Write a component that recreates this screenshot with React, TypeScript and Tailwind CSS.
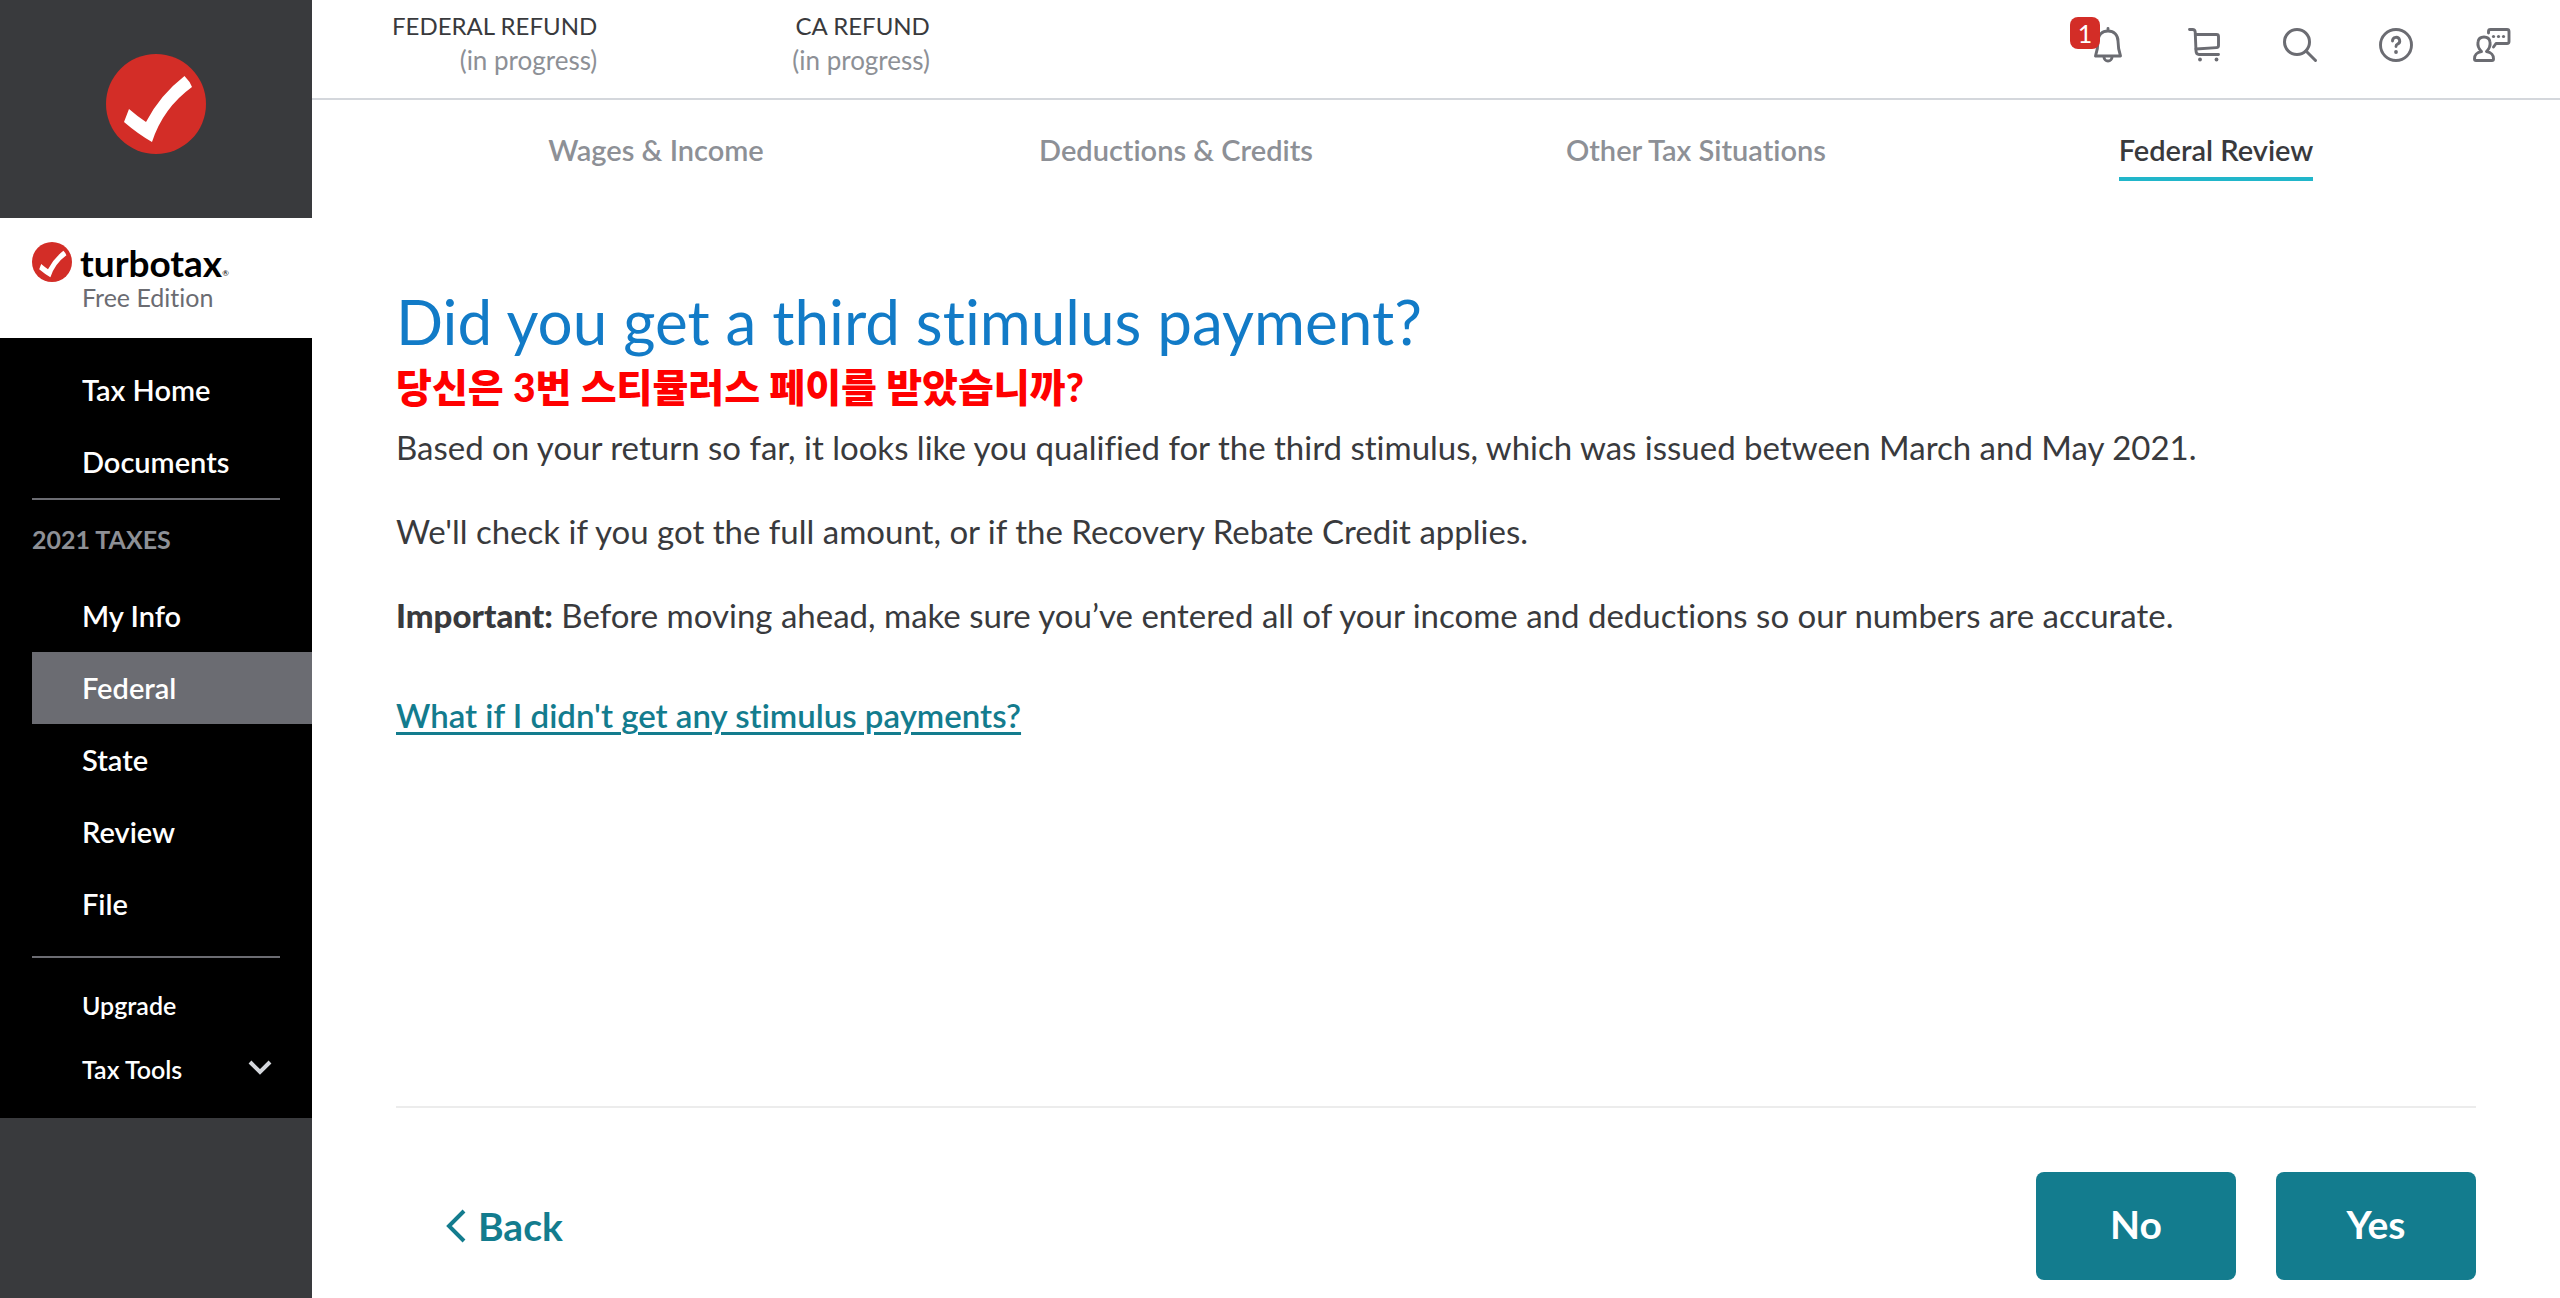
import React from "react";

type IconProps = { className?: string };

function CheckLogo({ className }: IconProps) {
  return (
    <svg viewBox="0 0 100 100" className={className} aria-hidden="true">
      <circle cx="50" cy="50" r="50" fill="#d32d27" />
      <path d="M23 55Q31 62 40 68Q54 41 78.500 22Q84 27.500 86 33Q57 54 46 88Q32 80 18 68Z" fill="#fff" />
    </svg>
  );
}

function BellIcon() {
  return (
    <svg viewBox="0 0 30 38" className="h-[38px] w-[30px]" fill="none" stroke="#6b6c72" strokeWidth="2.900" strokeLinejoin="round" strokeLinecap="round" aria-hidden="true">
      <path d="M15 2.500V5M15 5C9 5 5 9 5 15C5 22 4.500 24 2.500 30H27.500C25.500 24 25 22 25 15C25 9 21 5 15 5Z" />
      <path d="M11 31a4 4 0 0 0 8 0" />
    </svg>
  );
}

function CartIcon() {
  return (
    <svg viewBox="0 0 32 36" className="h-9 w-8" fill="none" stroke="#6b6c72" strokeWidth="2.900" strokeLinejoin="round" strokeLinecap="round" aria-hidden="true">
      <path d="M1.500 2.500H4.500Q7 2.500 7.200 5L8 24Q8.200 27.500 11 27.500H30.500" />
      <path d="M7.500 7.500H28.500Q30.500 7.500 30.500 9.500V18.500Q30.500 20.500 28.500 20.600L8 22" />
      <circle cx="12" cy="32.500" r="1.900" fill="#6b6c72" stroke="none" />
      <circle cx="28.500" cy="32.500" r="1.900" fill="#6b6c72" stroke="none" />
    </svg>
  );
}

function SearchIcon() {
  return (
    <svg viewBox="0 0 36 36" className="size-9" fill="none" stroke="#6b6c72" strokeWidth="3" strokeLinecap="round" aria-hidden="true">
      <circle cx="15" cy="15" r="12.500" />
      <path d="M24 24L33.500 33.500" />
    </svg>
  );
}

function HelpIcon() {
  return (
    <svg viewBox="0 0 36 36" className="size-9" fill="none" stroke="#6b6c72" strokeWidth="2.900" strokeLinecap="round" aria-hidden="true">
      <circle cx="18" cy="18" r="15.500" />
      <path d="M14.500 14A3.600 3.600 0 1 1 19.500 17.200Q18 17.800 18 19.500" />
      <circle cx="18" cy="25" r="1.900" fill="#6b6c72" stroke="none" />
    </svg>
  );
}

function ExpertIcon() {
  return (
    <svg viewBox="0 0 38 36" className="h-9 w-[38px]" fill="none" stroke="#6b6c72" strokeWidth="2.900" strokeLinejoin="round" strokeLinecap="round" aria-hidden="true">
      <path d="M8.500 24.500C5 21 4.500 18 5 15C5.500 11.500 8 10 11 10S16.500 11.500 17 15C17.500 18 17 21 13.500 24.500C18 25.500 20.500 27 20.500 32Q20.500 33.500 19 33.500H3Q1.500 33.500 1.500 32C1.500 27 4 25.500 8.500 24.500Z" />
      <path d="M15.500 6V4.500Q15.500 2.500 17.500 2.500H34Q36 2.500 36 4.500V14.500Q36 16.500 34 16.500H23L20.500 20" />
      <g fill="#6b6c72" stroke="none">
        <circle cx="20.500" cy="9.500" r="1.600" />
        <circle cx="25.500" cy="9.500" r="1.600" />
        <circle cx="30.500" cy="9.500" r="1.600" />
      </g>
    </svg>
  );
}

function NavItem({ label, active }: { label: string; active?: boolean }) {
  return (
    <a
      href="#"
      aria-current={active ? "page" : undefined}
      className={active ? "ml-8 flex h-18 items-center bg-[#6b6c72] pl-[50px]" : "ml-8 flex h-18 items-center pl-[50px]"}
    >
      {label}
    </a>
  );
}

function Sidebar() {
  return (
    <aside className="flex w-[312px] shrink-0 flex-col bg-[#393a3d]">
      <div className="flex h-[218px] justify-center pt-[54px]">
        <CheckLogo className="size-[100px]" />
      </div>
      <div className="flex h-[120px] gap-2 bg-white pt-6 pl-8">
        <CheckLogo className="size-10" />
        <div>
          <div className="flex items-end text-[37px] leading-[41px] font-bold text-black">
            turbotax<span className="text-[8px] leading-[20px] font-normal">®</span>
          </div>
          <div className="pl-0.5 text-[25px] leading-7 text-[#6b6c72]">Free Edition</div>
        </div>
      </div>
      <nav className="bg-black pt-4 pb-4 text-[29px] font-semibold text-white">
        <NavItem label="Tax Home" />
        <NavItem label="Documents" />
        <hr className="mx-8 border-t-2 border-[#6b6c72]" />
        <h2 className="flex h-20 items-center pl-8 text-[25px] font-bold text-[#8d9096]">2021 TAXES</h2>
        <NavItem label="My Info" />
        <NavItem label="Federal" active />
        <NavItem label="State" />
        <NavItem label="Review" />
        <NavItem label="File" />
        <hr className="mx-8 mt-4 mb-4 border-t-2 border-[#6b6c72]" />
        <div className="text-[25px]">
          <a href="#" className="flex h-16 items-center pl-[82px]">Upgrade</a>
          <button type="button" className="flex h-16 w-full items-center justify-between pr-10 pl-[82px]">
            Tax Tools
            <svg viewBox="0 0 24 20" className="h-5 w-6" fill="none" stroke="#d4d7dc" strokeWidth="4" aria-hidden="true">
              <path d="M2 2L12 12L22 2" />
            </svg>
          </button>
        </div>
      </nav>
    </aside>
  );
}

function Refund({ title }: { title: string }) {
  return (
    <div className="pt-2 text-right">
      <div className="text-[24px] leading-9 text-[#393a3d]">{title}</div>
      <div className="text-[26px] leading-8 text-[#8d9096]">(in progress)</div>
    </div>
  );
}

function Header() {
  return (
    <header className="flex h-[100px] justify-between border-b-2 border-[#d4d7dc] pr-12 pl-20">
      <div className="flex gap-[195px]">
        <Refund title="FEDERAL REFUND" />
        <Refund title="CA REFUND" />
      </div>
      <div className="flex items-center gap-14 pb-2 *:flex *:size-10 *:items-center *:justify-center">
        <button type="button" aria-label="Notifications, 1 new" className="relative">
          <BellIcon />
          <span className="absolute -top-2 -left-[18px] flex h-8 w-[30px] items-center justify-center rounded-lg bg-[#d32d27] text-[25px] leading-8 text-white">1</span>
        </button>
        <button type="button" aria-label="Cart"><CartIcon /></button>
        <button type="button" aria-label="Search"><SearchIcon /></button>
        <button type="button" aria-label="Help"><HelpIcon /></button>
        <button type="button" aria-label="Contact an expert"><ExpertIcon /></button>
      </div>
    </header>
  );
}

const tabs = ["Wages & Income", "Deductions & Credits", "Other Tax Situations", "Federal Review"];

export default function App() {
  return (
    <div className="flex min-h-screen bg-white font-['Lato','Noto_Sans_CJK_KR',sans-serif] text-[#393a3d] [font-variant-ligatures:no-common-ligatures]">
      <Sidebar />
      <div className="flex min-w-0 flex-1 flex-col">
        <Header />
        <nav className="grid grid-cols-4 px-[84px] pt-8 text-[29px] leading-9 font-semibold">
          {tabs.map((tab, i) => (
            <div key={tab} className="flex justify-center">
              <a href="#" className={i === 3 ? "border-b-4 border-[#21b6ca] pb-[9px]" : "pb-[9px] text-[#8d9096]"}>
                {tab}
              </a>
            </div>
          ))}
        </nav>
        <main className="flex flex-1 flex-col px-[84px] pt-[104px]">
          <h1 className="text-[62px] leading-[72px] text-[#127bc7]">Did you get a third stimulus payment?</h1>
          <p className="text-[39px] leading-[60px] font-black text-[#ff0000]">당신은 3번 스티뮬러스 페이를 받았습니까?</p>
          <div className="flex flex-col gap-10 pt-2 text-[33px] leading-[44px]">
            <p>Based on your return so far, it looks like you qualified for the third stimulus, which was issued between March and May 2021.</p>
            <p>We'll check if you got the full amount, or if the Recovery Rebate Credit applies.</p>
            <p><strong className="font-black">Important:</strong> Before moving ahead, make sure you’ve entered all of your income and deductions so our numbers are accurate.</p>
          </div>
          <a href="#" className="mt-14 self-start text-[33px] leading-[44px] font-semibold text-[#137c8e] underline decoration-3 underline-offset-4">
            What if I didn't get any stimulus payments?
          </a>
          <footer className="mt-auto flex items-center justify-between border-t-2 border-[#ececec] pt-16 pb-[18px] text-[39px] font-bold">
            <button type="button" className="flex items-center gap-3 pl-[50px] text-[#137c8e]">
              <svg viewBox="0 0 20 34" className="h-[34px] w-5" fill="none" stroke="#137c8e" strokeWidth="4" aria-hidden="true">
                <path d="M18 2L3 17L18 32" />
              </svg>
              Back
            </button>
            <div className="flex gap-10">
              <button type="button" className="h-[108px] w-[200px] rounded-lg bg-[#137c8e] pb-1 text-white">No</button>
              <button type="button" className="h-[108px] w-[200px] rounded-lg bg-[#137c8e] pb-1 text-white">Yes</button>
            </div>
          </footer>
        </main>
      </div>
    </div>
  );
}
